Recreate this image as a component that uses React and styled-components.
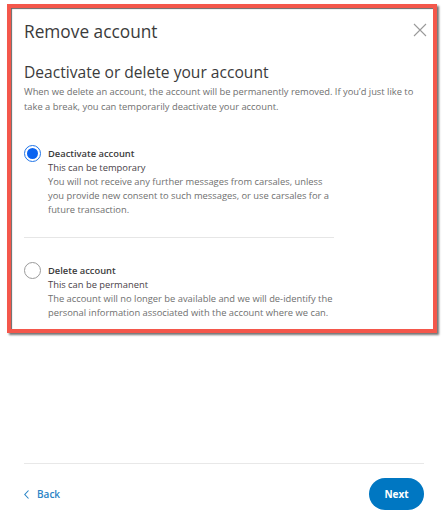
import styled, { createGlobalStyle } from "styled-components";

const GlobalStyle = createGlobalStyle`
  html, body {
    margin: 0;
    padding: 0;
    background: #ffffff;
  }
  body {
    font-family: "Open Sans", "Liberation Sans", sans-serif;
    color: #333;
  }
`;

const Page = styled.div`
  width: 447px;
  height: 521px;
  display: flex;
  flex-direction: column;
  box-sizing: border-box;
`;

const Highlight = styled.section`
  margin: 4px 0 0 7px;
  width: 430px;
  height: 329px;
  box-sizing: border-box;
  border: 4px solid #f4574b;
  box-shadow: 2px 2px 2px rgba(0, 0, 0, 0.55),
    inset 1px 1px 1px rgba(0, 0, 0, 0.6);
  padding: 11px 6px 0 13px;
  display: flex;
  flex-direction: column;
`;

const Header = styled.div`
  display: flex;
  justify-content: space-between;
  align-items: flex-start;
`;

const Title = styled.h1`
  margin: 0;
  font-size: 17.3px;
  font-weight: 400;
  color: #3b3b3b;
  line-height: 26px;
`;

const Close = styled.button`
  border: 0;
  background: none;
  padding: 0;
  margin: 4px 0 0 0;
  width: 14px;
  height: 14px;
  cursor: pointer;
  svg {
    display: block;
  }
`;

const Heading = styled.h2`
  margin: 15px 0 0 0;
  font-size: 15.6px;
  font-weight: 400;
  color: #3b3b3b;
  line-height: 24px;
`;

const Intro = styled.p`
  margin: 0;
  font-size: 9.35px;
  line-height: 15px;
  color: #707070;
`;

const Options = styled.div`
  width: 310px;
  margin-top: 33px;
`;

const Option = styled.label`
  display: flex;
  gap: 7px;
  padding: ${(p) => (p.$last ? "26px 0 0 0" : "0 0 20px 0")};
  border-bottom: ${(p) => (p.$last ? "none" : "1px solid #e6e6e6")};
  cursor: pointer;
`;

const Radio = styled.span`
  flex: none;
  width: 17px;
  height: 17px;
  box-sizing: border-box;
  border-radius: 50%;
  border: 1px solid ${(p) => (p.$checked ? "#1f74e8" : "#9a9a9a")};
  display: flex;
  align-items: center;
  justify-content: center;
  margin-top: -2px;
  &::after {
    content: "";
    display: ${(p) => (p.$checked ? "block" : "none")};
    width: 11px;
    height: 11px;
    border-radius: 50%;
    background: #0a63f0;
  }
`;

const OptionText = styled.div`
  font-size: 9.35px;
  line-height: 14px;
`;

const OptionName = styled.div`
  font-weight: 600;
  color: #3b3b3b;
`;

const OptionSub = styled.div`
  color: #4a3f4a;
`;

const OptionDesc = styled.div`
  color: #707070;
`;

const Spacer = styled.div`
  flex: 1;
`;

const Footer = styled.footer`
  margin: 0 23px 11px 24px;
  border-top: 1px solid #e8e8e8;
  padding-top: 14px;
  display: flex;
  justify-content: space-between;
  align-items: center;
`;

const BackLink = styled.a`
  display: flex;
  align-items: center;
  gap: 8px;
  font-size: 10px;
  font-weight: 600;
  color: #2a84c6;
  text-decoration: none;
  cursor: pointer;
  svg {
    display: block;
  }
`;

const NextButton = styled.button`
  border: 0;
  width: 55px;
  height: 32px;
  border-radius: 16px;
  background: #0077c2;
  color: #fff;
  font-family: "Open Sans", "Liberation Sans", sans-serif;
  font-size: 10px;
  font-weight: 700;
  cursor: pointer;
`;

const options = [
  {
    id: "deactivate",
    name: "Deactivate account",
    sub: "This can be temporary",
    desc:
      "You will not receive any further messages from carsales, unless you provide new consent to such messages, or use carsales for a future transaction.",
  },
  {
    id: "delete",
    name: "Delete account",
    sub: "This can be permanent",
    desc:
      "The account will no longer be available and we will de-identify the personal information associated with the account where we can.",
  },
];

export default function App() {
  const selected = "deactivate";

  return (
    <>
      <GlobalStyle />
      <Page>
        <Highlight>
          <Header>
            <Title>Remove account</Title>
            <Close aria-label="Close">
              <svg width="14" height="14" viewBox="0 0 14 14">
                <path
                  d="M1 1 L13 13 M13 1 L1 13"
                  stroke="#9a9a9a"
                  strokeWidth="1.1"
                  fill="none"
                />
              </svg>
            </Close>
          </Header>
          <Heading>Deactivate or delete your account</Heading>
          <Intro>
            When we delete an account, the account will be permanently removed. If
            you’d just like to take a break, you can temporarily deactivate your
            account.
          </Intro>
          <Options>
            {options.map((o, i) => (
              <Option key={o.id} $last={i === options.length - 1}>
                <Radio $checked={o.id === selected} />
                <OptionText>
                  <OptionName>{o.name}</OptionName>
                  <OptionSub>{o.sub}</OptionSub>
                  <OptionDesc>{o.desc}</OptionDesc>
                </OptionText>
              </Option>
            ))}
          </Options>
        </Highlight>
        <Spacer />
        <Footer>
          <BackLink>
            <svg width="5" height="9" viewBox="0 0 5 9">
              <path
                d="M4.5 0.5 L0.8 4.5 L4.5 8.5"
                stroke="#2a84c6"
                strokeWidth="1.1"
                fill="none"
              />
            </svg>
            Back
          </BackLink>
          <NextButton>Next</NextButton>
        </Footer>
      </Page>
    </>
  );
}
